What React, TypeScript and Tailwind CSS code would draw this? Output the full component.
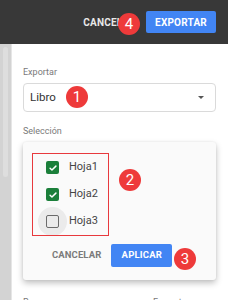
import React from "react";

const Badge = ({ n, x, y }: { n: string; x: number; y: number }) => (
  <div
    className="absolute w-[22px] h-[22px] rounded-full bg-[#ee3a3a] text-white flex items-center justify-center text-[15px] leading-none"
    style={{ left: x - 11, top: y - 11 }}
  >
    {n}
  </div>
);

const Check = ({ on }: { on: boolean }) =>
  on ? (
    <div className="w-[13px] h-[13px] rounded-[2px] bg-[#1b7f3a] flex items-center justify-center">
      <svg width="10" height="10" viewBox="0 0 24 24" fill="none" stroke="white" strokeWidth="3.5" strokeLinecap="round" strokeLinejoin="round">
        <path d="M5 12.5l4.5 4.5L19 7.5" />
      </svg>
    </div>
  ) : (
    <div className="relative w-[13px] h-[13px] flex items-center justify-center">
      <div className="absolute w-[29px] h-[29px] rounded-full bg-[#ebebeb]" />
      <div className="relative w-[13px] h-[13px] rounded-[2px] border-[1.5px] border-[#6b6b6b]" />
    </div>
  );

export default function App() {
  const sheets = [
    { name: "Hoja1", on: true },
    { name: "Hoja2", on: true },
    { name: "Hoja3", on: false },
  ];

  return (
    <div className="relative w-[228px] h-[300px] overflow-hidden bg-white font-['Roboto',sans-serif]">
      {/* top bar */}
      <div className="h-[44px] bg-[#383838] flex items-center justify-end pr-[12px] gap-[10px]">
        <span className="text-[10px] font-bold text-[#e8e8e8] tracking-[0.2px]">CANCELAR</span>
        <button className="w-[70px] h-[22px] rounded-[2px] bg-[#4285f4] text-white text-[10px] font-bold tracking-[0.2px]">
          EXPORTAR
        </button>
      </div>

      <div className="flex h-[256px]">
        {/* left strip with scroll thumb */}
        <div className="w-[12px] bg-[#d3d3d3] border-r border-[#e6e6e6] pt-[3px] pl-[3px]">
          <div className="w-[5px] h-[130px] rounded-[3px] bg-[#dedede]" />
        </div>

        <div className="flex-1 pl-[11px] pr-[12px] pt-[22px]">
          <div className="text-[9px] leading-[12px] text-[#7a7a7a]">Exportar</div>
          <div className="mt-[5px] h-[29px] border border-[#dadada] rounded-[4px] flex items-center pl-[6px] pr-[11px] justify-between">
            <span className="text-[11.5px] text-[#333]">Libro</span>
            <div className="w-0 h-0 border-l-[3px] border-r-[3px] border-t-[3px] border-l-transparent border-r-transparent border-t-[#555]" />
          </div>

          <div className="mt-[13px] text-[9px] leading-[12px] text-[#7a7a7a]">Selección</div>

          <div className="mt-[5px] h-[138px] bg-[#fafafa] rounded-[3px] shadow-[0_3px_6px_rgba(0,0,0,0.25),0_0_2px_rgba(0,0,0,0.08)] pt-[11px] pl-[9px]">
            <div className="w-[77px] h-[83px] border-[1.5px] border-[#e8393d] overflow-hidden">
              {sheets.map((s) => (
                <div key={s.name} className="h-[27px] flex items-center pl-[13px] gap-[10px]">
                  <Check on={s.on} />
                  <span className="text-[11px] text-[#444]">{s.name}</span>
                </div>
              ))}
            </div>
            <div className="mt-[8px] flex items-center pl-[20px] gap-[10px]">
              <span className="text-[9.5px] font-bold text-[#7a7a7a] tracking-[0.1px]">CANCELAR</span>
              <button className="w-[61px] h-[23px] rounded-[2px] bg-[#4285f4] text-white text-[9.5px] font-bold tracking-[0.2px]">
                APLICAR
              </button>
            </div>
          </div>

          <div className="mt-[16px] flex text-[9px] leading-[12px] text-[#7a7a7a]">
            <span className="w-[130px]">Rango</span>
            <span>Formato</span>
          </div>
        </div>
      </div>

      <Badge n="4" x={129} y={24} />
      <Badge n="1" x={77} y={97} />
      <Badge n="2" x={130} y={180} />
      <Badge n="3" x={185} y={259} />
    </div>
  );
}
